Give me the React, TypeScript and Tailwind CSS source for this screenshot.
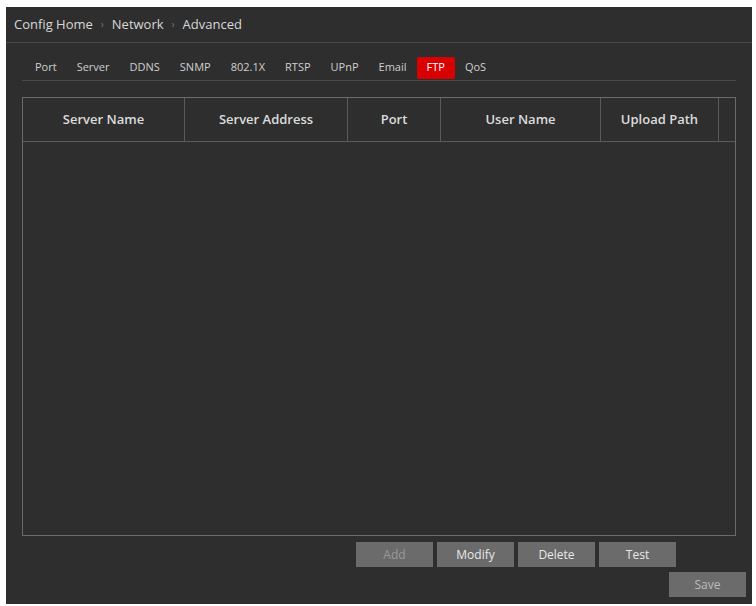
export default function App() {
  const tabs = ["Port","Server","DDNS","SNMP","802.1X","RTSP","UPnP","Email","FTP","QoS"];
  const cols: [string, number][] = [["Server Name",162],["Server Address",163],["Port",93],["User Name",160],["Upload Path",118]];
  return (
    <div className="w-[756px] h-[606px] bg-white pt-[7px] pl-[6px] pr-[4px] pb-[2px]" style={{fontFamily:'"Open Sans","Liberation Sans",sans-serif'}}>
      <div className="w-full h-full bg-[#2e2e2e] flex flex-col">
        <div className="h-[36px] flex items-center px-[8px] text-[13px] text-[#d8d8d8] border-b border-[#4a4a4a]">
          Config Home <span className="mx-[8px] text-[#777] text-[10px]">›</span> Network <span className="mx-[8px] text-[#777] text-[10px]">›</span> Advanced
        </div>
        <div className="mx-[16px] mt-[14px] h-[24px] flex items-center pl-[3px] border-b border-[#4a4a4a] pb-[2px]">
          {tabs.map(t => (
            <div key={t} className={"px-[10px] h-[22px] flex items-center text-[11px] rounded-[2px] " + (t==="FTP" ? "bg-[#d80000] text-white" : "text-[#cfcfcf]")}>{t}</div>
          ))}
        </div>
        <div className="mx-[16px] mt-[16px] h-[439px] border border-[#6a6a6a]">
          <div className="h-[44px] flex border-b border-[#5a5a5a]">
            {cols.map(([c,w]) => (
              <div key={c} style={{width:w}} className="flex items-center justify-center text-[13px] font-semibold text-[#dcdcdc] border-r border-[#5a5a5a]">{c}</div>
            ))}
          </div>
        </div>
        <div className="flex justify-end gap-[4px] mt-[6px] pr-[76px]">
          {["Add","Modify","Delete","Test"].map(b => (
            <div key={b} className={"w-[77px] h-[25px] bg-[#6b6b6b] flex items-center justify-center text-[12px] " + (b==="Add" ? "text-[#9a9a9a]" : "text-[#e8e8e8]")}>{b}</div>
          ))}
        </div>
        <div className="flex justify-end pr-[6px] mt-[5px]">
          <div className="w-[77px] h-[25px] bg-[#6b6b6b] flex items-center justify-center text-[12px] text-[#bbb]">Save</div>
        </div>
      </div>
    </div>
  );
}
